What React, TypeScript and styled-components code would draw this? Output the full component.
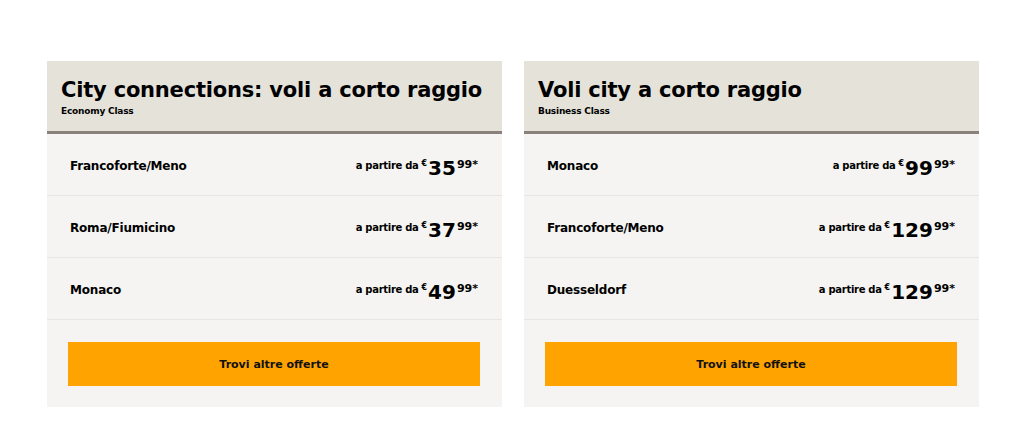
import React from "react";
import styled, { createGlobalStyle } from "styled-components";

const Global = createGlobalStyle`
  html, body { margin: 0; padding: 0; background: #ffffff; }
  body { font-family: "DejaVu Sans", "Liberation Sans", Arial, sans-serif; color: #000; }
`;

const Page = styled.div`
  display: flex;
  gap: 22px;
  padding: 61px 45px 0 47px;
`;

const Card = styled.section`
  width: 455px;
  background: #f5f4f2;
  display: flex;
  flex-direction: column;
`;

const Header = styled.header`
  background: #e5e2da;
  border-bottom: 3px solid #8a817b;
  height: 73px;
  padding: 17px 14px 0 14px;
  box-sizing: border-box;
`;

const Title = styled.h2`
  margin: 0;
  font-size: 21px;
  line-height: 24px;
  font-weight: 700;
  letter-spacing: -0.2px;
`;

const Sub = styled.div`
  font-size: 9px;
  font-weight: 700;
  line-height: 11px;
  margin-top: 4px;
  letter-spacing: -0.2px;
`;

const Row = styled.div`
  height: 62px;
  box-sizing: border-box;
  border-bottom: 1px solid #e8e6e2;
  display: flex;
  align-items: center;
  justify-content: space-between;
  padding: 2px 24px 0 23px;
`;

const City = styled.span`
  font-size: 12px;
  font-weight: 700;
  letter-spacing: -0.2px;
`;

const Price = styled.span`
  display: flex;
  align-items: flex-start;
  white-space: nowrap;
  height: 20px;
  margin-top: 4px;
`;

const From = styled.span`
  font-size: 10px;
  line-height: 10px;
  font-weight: 700;
  letter-spacing: -0.3px;
  margin-top: 3px;
  margin-right: 3px;
`;

const Euro = styled.span`
  font-size: 8px;
  line-height: 8px;
  font-weight: 700;
  margin-top: 2px;
  margin-right: 1px;
`;

const Amount = styled.span`
  font-size: 20px;
  font-weight: 700;
  line-height: 20px;
`;

const Cents = styled.span`
  font-size: 11px;
  font-weight: 700;
  line-height: 11px;
  margin-top: 1px;
  margin-left: 1px;
`;

const Footer = styled.div`
  padding: 22px 22px 21px 21px;
`;

const Button = styled.button`
  display: block;
  width: 100%;
  height: 44px;
  border: none;
  background: #ffa300;
  color: #111;
  font-family: "DejaVu Sans", "Liberation Sans", Arial, sans-serif;
  font-size: 11px;
  font-weight: 700;
  padding: 0;
  cursor: pointer;
`;

type Offer = { city: string; amount: string };

const cards: { title: string; sub: string; offers: Offer[] }[] = [
  {
    title: "City connections: voli a corto raggio",
    sub: "Economy Class",
    offers: [
      { city: "Francoforte/Meno", amount: "35" },
      { city: "Roma/Fiumicino", amount: "37" },
      { city: "Monaco", amount: "49" },
    ],
  },
  {
    title: "Voli city a corto raggio",
    sub: "Business Class",
    offers: [
      { city: "Monaco", amount: "99" },
      { city: "Francoforte/Meno", amount: "129" },
      { city: "Duesseldorf", amount: "129" },
    ],
  },
];

export default function App() {
  return (
    <>
      <Global />
      <Page>
        {cards.map((c) => (
          <Card key={c.title}>
            <Header>
              <Title>{c.title}</Title>
              <Sub>{c.sub}</Sub>
            </Header>
            {c.offers.map((o) => (
              <Row key={o.city}>
                <City>{o.city}</City>
                <Price>
                  <From>a partire da</From>
                  <Euro>€</Euro>
                  <Amount>{o.amount}</Amount>
                  <Cents>99*</Cents>
                </Price>
              </Row>
            ))}
            <Footer>
              <Button>Trovi altre offerte</Button>
            </Footer>
          </Card>
        ))}
      </Page>
    </>
  );
}
